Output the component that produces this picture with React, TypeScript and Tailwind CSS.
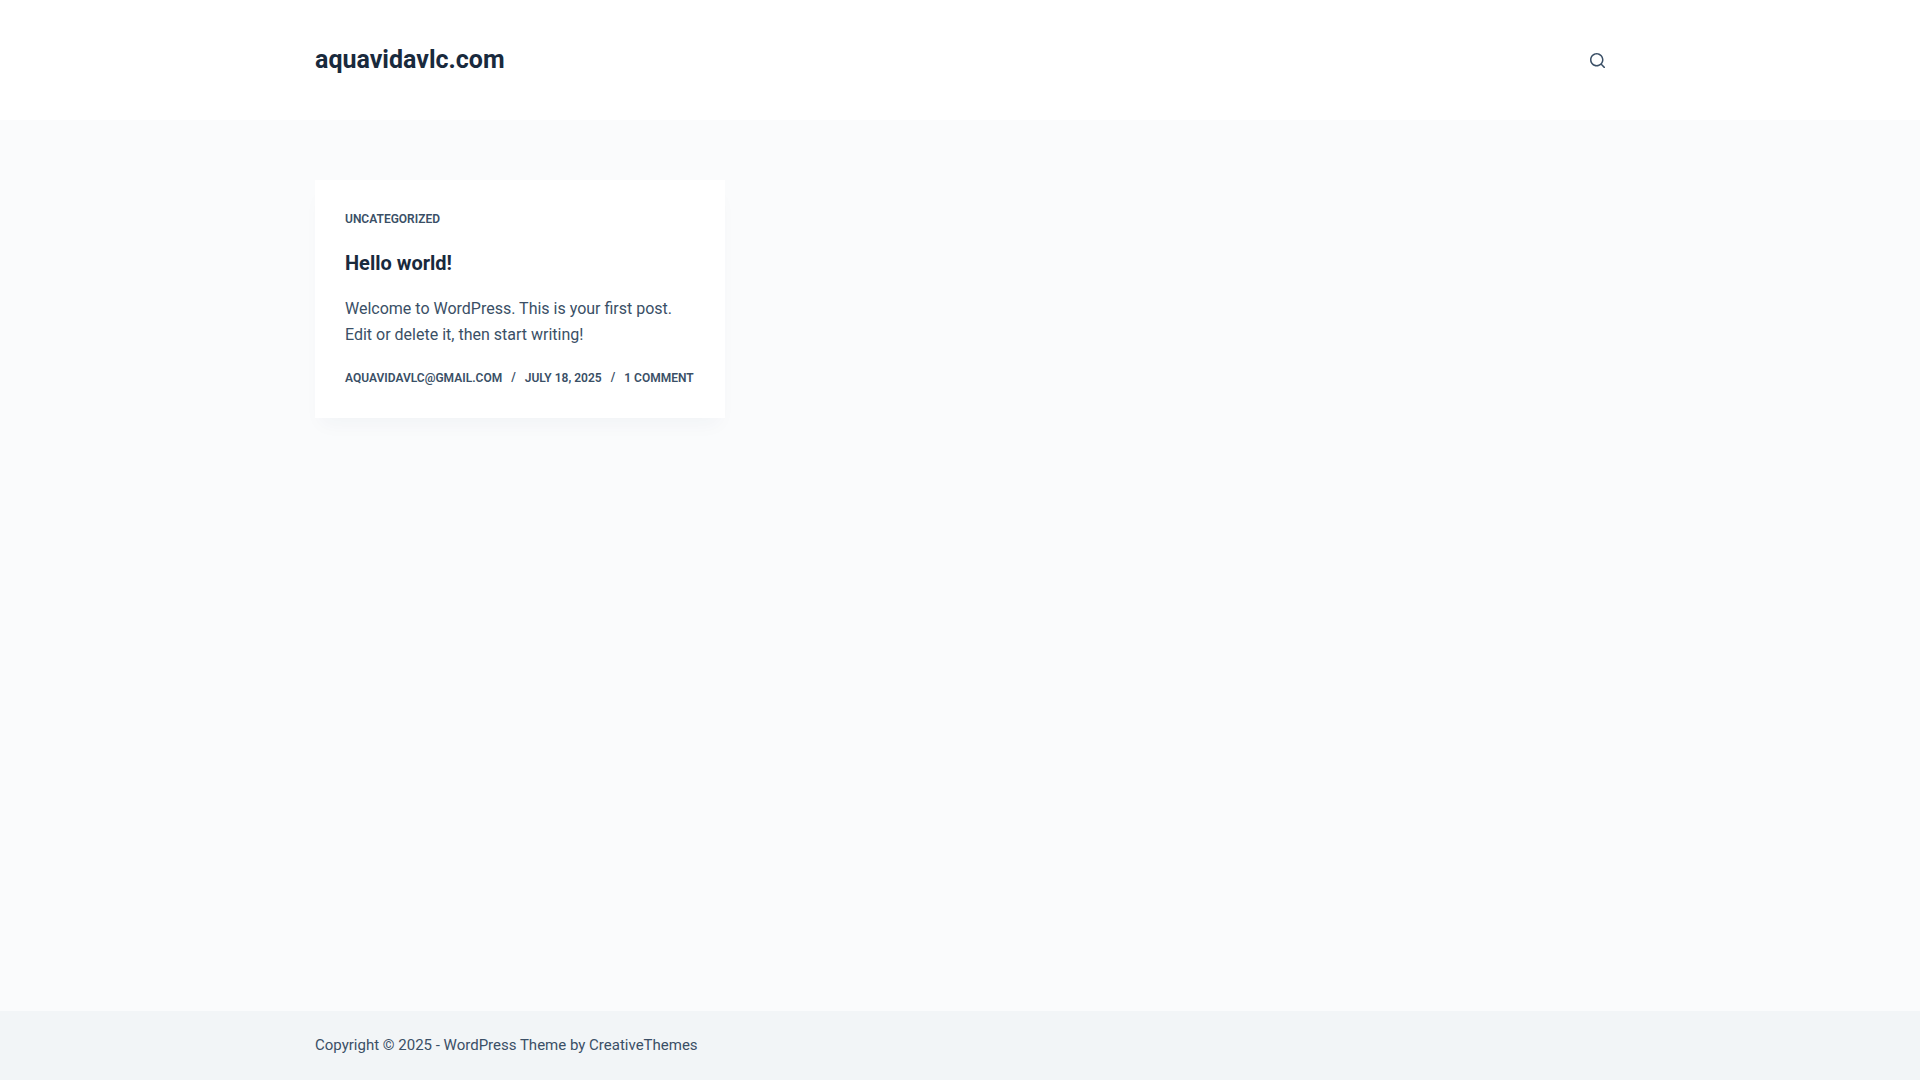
import React from 'react';

const meta = ['aquavidavlc@gmail.com', 'July 18, 2025', '1 Comment'];

const SearchIcon = () => (
  <svg className="w-[15px] h-[15px]" viewBox="0 0 15 15" fill="currentColor" aria-hidden="true">
    <path d="M14.8,13.7L12,11c0.9-1.2,1.5-2.6,1.5-4.2c0-3.7-3-6.8-6.8-6.8S0,3,0,6.8s3,6.8,6.8,6.8c1.6,0,3.1-0.6,4.2-1.5l2.8,2.8c0.1,0.1,0.3,0.2,0.5,0.2s0.4-0.1,0.5-0.2C15.1,14.5,15.1,14,14.8,13.7z M1.5,6.8c0-2.9,2.4-5.2,5.2-5.2S12,3.9,12,6.8S9.6,12,6.8,12S1.5,9.6,1.5,6.8z" />
  </svg>
);

const PostCard = () => (
  <article className="bg-white p-[30px] shadow-[0_12px_18px_-6px_rgba(34,56,101,0.04)]">
    <a href="#uncategorized" className="block mb-5 text-xs leading-[18px] font-semibold uppercase">
      Uncategorized
    </a>
    <h2 className="mb-[18px] text-xl leading-[30px] font-bold text-[#192a3d]">
      <a href="#hello-world">Hello world!</a>
    </h2>
    <p className="mb-5 text-base leading-[26px]">
      Welcome to WordPress. This is your first post. Edit or delete it, then start writing!
    </p>
    <ul className="flex flex-wrap text-xs leading-5 font-semibold uppercase">
      {meta.map((item, i) => (
        <li key={item} className="flex">
          {i > 0 && <span className="mx-[9px] leading-[18px]">/</span>}
          <a href="#hello-world">{item}</a>
        </li>
      ))}
    </ul>
  </article>
);

export default function App() {
  return (
    <div className="min-h-screen flex flex-col bg-[#fafbfc] font-[Roboto,sans-serif] text-[#3a4f66]">
      <header className="bg-white">
        <div className="mx-auto w-[88%] max-w-[1290px] py-[41px] flex items-center justify-between">
          <a href="#home" className="text-[25px] leading-[38px] font-bold text-[#192a3d]">
            aquavidavlc.com
          </a>
          <button type="button" aria-label="Search">
            <SearchIcon />
          </button>
        </div>
      </header>

      <main className="flex-1">
        <div className="mx-auto w-[88%] max-w-[1290px] py-[60px] grid grid-cols-1 md:grid-cols-2 lg:grid-cols-3 gap-[30px]">
          <PostCard />
        </div>
      </main>

      <footer className="bg-[#f2f5f7]">
        <div className="mx-auto w-[88%] max-w-[1290px] py-[22px] text-[15px] leading-[25px]">
          Copyright © 2025 - WordPress Theme by <a href="#creativethemes">CreativeThemes</a>
        </div>
      </footer>
    </div>
  );
}
